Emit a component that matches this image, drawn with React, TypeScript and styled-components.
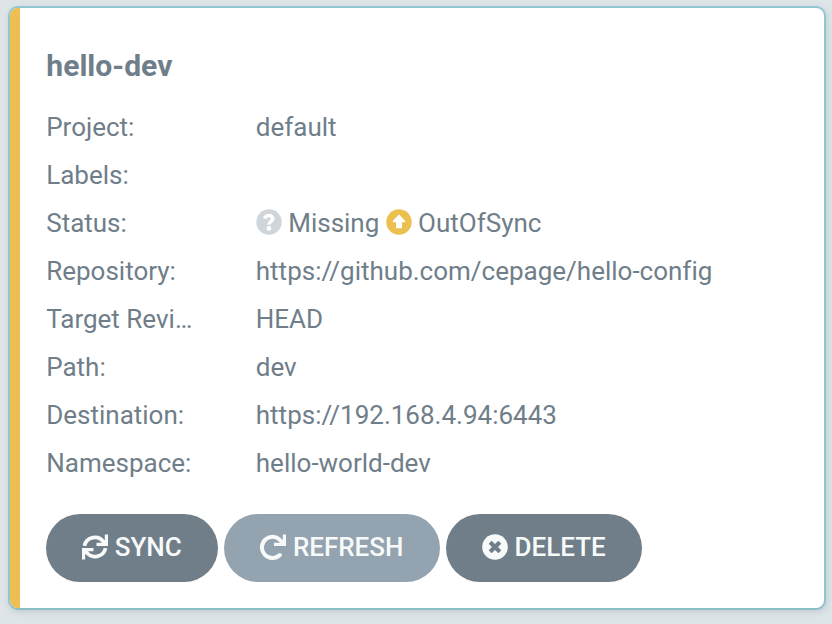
import React from 'react';
import styled, { createGlobalStyle } from 'styled-components';

const Global = createGlobalStyle`
  * { box-sizing: border-box; }
  body { margin: 0; background: #dee5e8; font-family: Roboto, sans-serif; font-variant-ligatures: none; }
`;
const Page = styled.div`
  height: 624px;
  padding: 6px 6px 14px 8px;
  background: #dee5e8;
`;
const Card = styled.article`
  height: 604px;
  border: 2px solid #92c5d2;
  border-bottom-color: #8bbdc9;
  border-radius: 10px;
  background: #fff;
  box-shadow: 1px 2px 6px rgba(90, 110, 120, 0.22);
  display: flex;
  overflow: hidden;
`;
const Stripe = styled.div`
  width: 10px;
  background: #ecc050;
`;
const Body = styled.div`
  flex: 1;
  padding: 40px 26px 0;
`;
const Title = styled.h1`
  margin: 0 0 19px;
  padding-left: 0.3px;
  font-size: 30.1px;
  line-height: 36px;
  font-weight: 700;
  color: #6f7e89;
`;
const Row = styled.div`
  display: grid;
  grid-template-columns: 150px 1fr;
  column-gap: 59.8px;
  height: 48px;
  line-height: 48px;
  font-size: 26px;
  color: #6f7e89;
`;
const Label = styled.div`
  padding-left: 0.2px;
  overflow: hidden;
  text-overflow: ellipsis;
  white-space: nowrap;
`;
const Value = styled.div`
  display: flex;
  align-items: center;
  white-space: nowrap;
`;
const Status = styled.span`
  display: flex;
  align-items: center;
  gap: 6.4px;
  margin-right: 6.4px;
  svg { margin-top: -2px; }
`;
const Actions = styled.div`
  display: flex;
  gap: 6px;
  margin-top: 27px;
`;
const Button = styled.button<{ $w: number; $light?: boolean }>`
  width: ${p => p.$w}px;
  height: 68px;
  padding: 0 0 2px;
  border: 0;
  border-radius: 34px;
  background: ${p => (p.$light ? '#94a3b0' : '#6f7e89')};
  color: #f8fafa;
  font: 500 26px Roboto, sans-serif;
  display: flex;
  align-items: center;
  justify-content: center;
  gap: 6.4px;
  svg { margin-top: -1px; }
`;
const Icon = styled.svg.attrs({ viewBox: '0 0 26 26', width: 26, height: 26 })`
  flex: none;
  fill: none;
`;

const MissingIcon = () => (
  <Icon>
    <circle cx="13" cy="13" r="12.7" fill="#ced6dc" />
    <path d="M8.3 9.4C9.4 7.4 10.9 6.5 12.9 6.5C15.3 6.5 16.8 8 16.8 9.8C16.8 12.6 13 12.4 13 15.7" stroke="#fff" strokeWidth="3.4" />
    <circle cx="12.9" cy="19.4" r="2.4" fill="#fff" />
  </Icon>
);
const OutOfSyncIcon = () => (
  <Icon>
    <circle cx="13" cy="13" r="12.7" fill="#ecc050" />
    <path d="M12.4 5.9Q13 5.3 13.6 5.9L19.2 11.9Q19.9 13.1 18.6 13.3H16V18.6Q16 19.3 15.3 19.3H10.7Q10 19.3 10 18.6V13.3H7.4Q6.1 13.1 6.8 11.9Z" fill="#fff" />
  </Icon>
);
const SyncIcon = () => (
  <Icon stroke="currentColor" strokeWidth="3.7">
    <path d="M2.4 11.8A10.7 10.7 0 0 1 21.6 8M23.6 14.2A10.7 10.7 0 0 1 4.4 18" />
    <path d="M24.4 0.4V10.4H14.5M20.6 6.6L24 10M1.6 25.6V15.6H11.5M5.4 19.4L2 16" strokeWidth="3.2" />
  </Icon>
);
const RedoIcon = () => (
  <Icon stroke="currentColor" strokeWidth="3.9">
    <path d="M19.9 21A10.6 10.6 0 1 1 21.1 7.2" strokeLinecap="round" />
    <path d="M24.4 0.5V10.3H14M20 6.3L24 10" strokeWidth="3.2" />
  </Icon>
);
const DeleteIcon = () => (
  <Icon>
    <circle cx="13" cy="13" r="12.8" fill="currentColor" />
    <path d="M8.2 8.2L17.8 17.8M17.8 8.2L8.2 17.8" stroke="#6f7e89" strokeWidth="4.2" />
  </Icon>
);

export default function App() {
  return (
    <Page>
      <Global />
      <Card>
        <Stripe />
        <Body>
          <Title>hello-dev</Title>
          <Row><Label>Project:</Label><Value>default</Value></Row>
          <Row><Label>Labels:</Label><Value /></Row>
          <Row>
            <Label>Status:</Label>
            <Value>
              <Status><MissingIcon />Missing</Status>
              <Status><OutOfSyncIcon />OutOfSync</Status>
            </Value>
          </Row>
          <Row><Label>Repository:</Label><Value>https://github.com/cepage/hello-config</Value></Row>
          <Row><Label>Target Revi…</Label><Value>HEAD</Value></Row>
          <Row><Label>Path:</Label><Value>dev</Value></Row>
          <Row><Label>Destination:</Label><Value>https://192.168.4.94:6443</Value></Row>
          <Row><Label>Namespace:</Label><Value>hello-world-dev</Value></Row>
          <Actions>
            <Button $w={172}><SyncIcon />SYNC</Button>
            <Button $w={216} $light><RedoIcon />REFRESH</Button>
            <Button $w={196}><DeleteIcon />DELETE</Button>
          </Actions>
        </Body>
      </Card>
    </Page>
  );
}
